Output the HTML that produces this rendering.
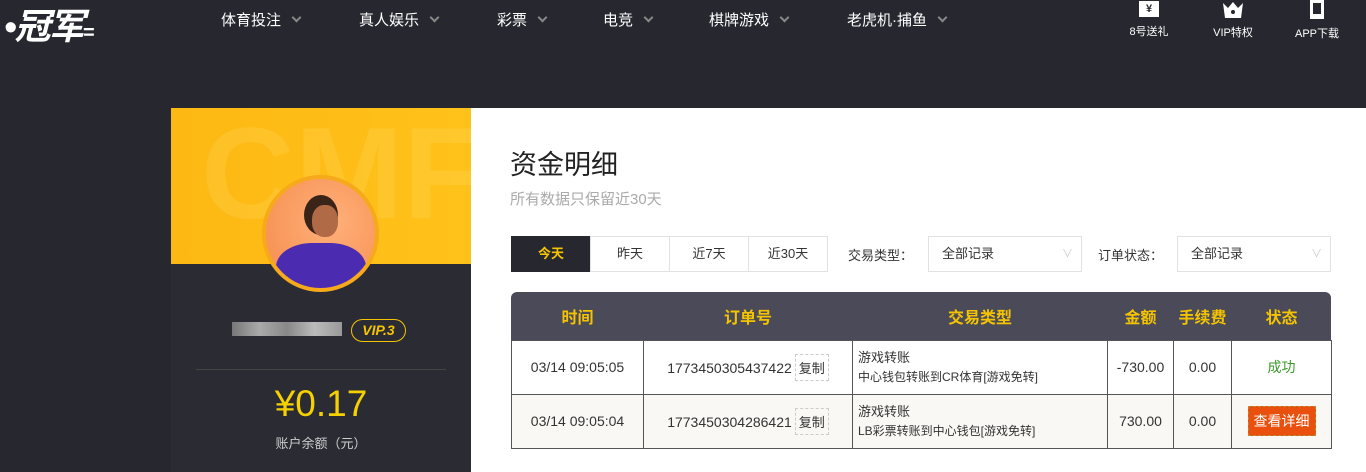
<!DOCTYPE html>
<html><head><meta charset="utf-8"><style>
*{margin:0;padding:0;box-sizing:border-box}
body{width:1366px;height:472px;overflow:hidden;background:#27272f;font-family:"Liberation Sans","Noto Sans CJK SC",sans-serif;position:relative;color:#333}
.abs{position:absolute}
.nav{color:#fff;font-size:15px;top:9px}
.nav i{display:inline-block;width:7px;height:7px;border-right:2px solid #888;border-bottom:2px solid #888;transform:rotate(45deg);margin-left:12px;position:relative;top:-4px}
.ic{color:#fff;font-size:11px;text-align:center;top:0}
.btn{position:absolute;top:236px;height:36px;border:1px solid #e2e2e2;font-size:13px;line-height:34px;text-align:center;color:#333;background:#fff}
table{border-collapse:collapse;position:absolute;left:511px;top:292px;width:821px;font-size:14px}
th{color:#f5c400;font-size:16px;height:48px;font-weight:bold;background:none}
td{border:1px solid #555;text-align:center;height:54px}
tr.r2 td{background:#f9f8f5}
.cp{display:inline-block;border:1px dashed #ccc;padding:3px 3px;margin-left:3px;font-size:13px}
</style></head><body>
<div class="abs" style="left:4px;top:-2px;color:#fff;font-size:36px;font-weight:bold;font-style:italic;letter-spacing:-2px">•冠军<span style="font-size:20px">=</span></div>
<div class="abs nav" style="left:221px">体育投注<i></i></div>
<div class="abs nav" style="left:359px">真人娱乐<i></i></div>
<div class="abs nav" style="left:497px">彩票<i></i></div>
<div class="abs nav" style="left:603px">电竞<i></i></div>
<div class="abs nav" style="left:709px">棋牌游戏<i></i></div>
<div class="abs nav" style="left:847px">老虎机·捕鱼<i></i></div>
<div class="abs ic" style="left:1126px;width:46px"><div style="margin:1px auto 0;width:20px;height:16px;background:#fff;color:#27272f;font-size:11px;font-weight:bold;line-height:16px">¥</div><div style="margin-top:6px">8号送礼</div></div>
<div class="abs ic" style="left:1208px;width:50px"><svg width="22" height="18" viewBox="0 0 22 18" style="display:block;margin:1px auto 0"><path d="M1 2L6 7L11 1L16 7L21 2L19 17H3Z" fill="#fff"/><circle cx="11" cy="11" r="2" fill="#27272f"/></svg><div style="margin-top:5px">VIP特权</div></div>
<div class="abs ic" style="left:1290px;width:54px"><div style="margin:0 auto;width:14px;height:19px;border:2px solid #fff;background:#fff;position:relative"><div style="position:absolute;left:1px;top:1px;width:8px;height:11px;background:#27272f"></div></div><div style="margin-top:6px">APP下载</div></div>

<div class="abs" style="left:171px;top:108px;width:300px;height:364px;background:#2b2b34"></div>
<div class="abs" style="left:171px;top:108px;width:300px;height:156px;background:linear-gradient(90deg,#fdb813,#ffc21a);overflow:hidden"><div style="position:absolute;left:30px;top:-10px;font-size:130px;font-weight:bold;color:rgba(255,225,110,0.22)">CMF</div></div>
<div class="abs" style="left:262px;top:175px;width:117px;height:117px;border-radius:50%;background:#f6a91a;padding:4px"><div style="width:100%;height:100%;border-radius:50%;background:radial-gradient(circle at 60% 40%,#ffb07a,#f58a4a);overflow:hidden;position:relative"><div style="position:absolute;left:38px;top:16px;width:34px;height:40px;border-radius:50%;background:#3a2418"></div><div style="position:absolute;left:46px;top:26px;width:26px;height:32px;border-radius:45%;background:#b06a45"></div><div style="position:absolute;left:10px;top:64px;width:90px;height:60px;border-radius:40% 40% 0 0;background:#4b2bb0"></div></div></div>
<div class="abs" style="left:232px;top:322px;width:110px;height:14px;background:linear-gradient(90deg,#777,#aaa,#888,#bbb,#999)"></div>
<div class="abs" style="left:351px;top:319px;width:55px;height:23px;border:1.5px solid #f5c400;border-radius:12px;color:#f5c400;font-weight:bold;font-style:italic;font-size:14px;text-align:center;line-height:20px">VIP.3</div>
<div class="abs" style="left:196px;top:369px;width:250px;height:1px;background:#444"></div>
<div class="abs" style="left:171px;width:300px;top:383px;text-align:center;color:#f5d100;font-size:37px">¥0.17</div>
<div class="abs" style="left:171px;width:300px;top:433px;text-align:center;color:#ccc;font-size:13px">账户余额（元）</div>

<div class="abs" style="left:471px;top:108px;width:895px;height:364px;background:#fff"></div>
<div class="abs" style="left:510px;top:143px;font-size:27px;color:#222">资金明细</div>
<div class="abs" style="left:510px;top:188px;font-size:15px;color:#aaa">所有数据只保留近30天</div>
<div class="btn" style="left:511px;width:80px;background:#27272f;color:#f5c400;border-color:#27272f;font-weight:bold">今天</div>
<div class="btn" style="left:590px;width:80px">昨天</div>
<div class="btn" style="left:669px;width:80px">近7天</div>
<div class="btn" style="left:748px;width:80px">近30天</div>
<div class="abs" style="left:848px;top:245px;font-size:13px">交易类型：</div>
<div class="btn" style="left:928px;width:154px;text-align:left;padding-left:13px">全部记录<span style="position:absolute;right:8px;color:#ccc;font-size:11px">∨</span></div>
<div class="abs" style="left:1098px;top:245px;font-size:13px">订单状态：</div>
<div class="btn" style="left:1177px;width:154px;text-align:left;padding-left:13px">全部记录<span style="position:absolute;right:8px;color:#ccc;font-size:11px">∨</span></div>

<div class="abs" style="left:511px;top:292px;width:820px;height:48px;background:#4a4a58;border-radius:6px 6px 0 0"></div>
<table>
<tr><th style="width:132px">时间</th><th style="width:209px">订单号</th><th style="width:255px">交易类型</th><th style="width:66px">金额</th><th style="width:58px">手续费</th><th>状态</th></tr>
<tr><td>03/14 09:05:05</td><td>1773450305437422<span class="cp">复制</span></td><td style="text-align:left;padding-left:5px;font-size:12px;line-height:19px"><span style="font-size:13px">游戏转账</span><br>中心钱包转账到CR体育[游戏免转]</td><td>-730.00</td><td>0.00</td><td style="color:#3a9a2a">成功</td></tr>
<tr class="r2"><td>03/14 09:05:04</td><td>1773450304286421<span class="cp">复制</span></td><td style="text-align:left;padding-left:5px;font-size:12px;line-height:19px"><span style="font-size:13px">游戏转账</span><br>LB彩票转账到中心钱包[游戏免转]</td><td>730.00</td><td>0.00</td><td><span style="display:inline-block;background:#e9500e;color:#fff;padding:4px 5px;border:1px dashed #b83">查看详细</span></td></tr>
</table>
</body></html>
